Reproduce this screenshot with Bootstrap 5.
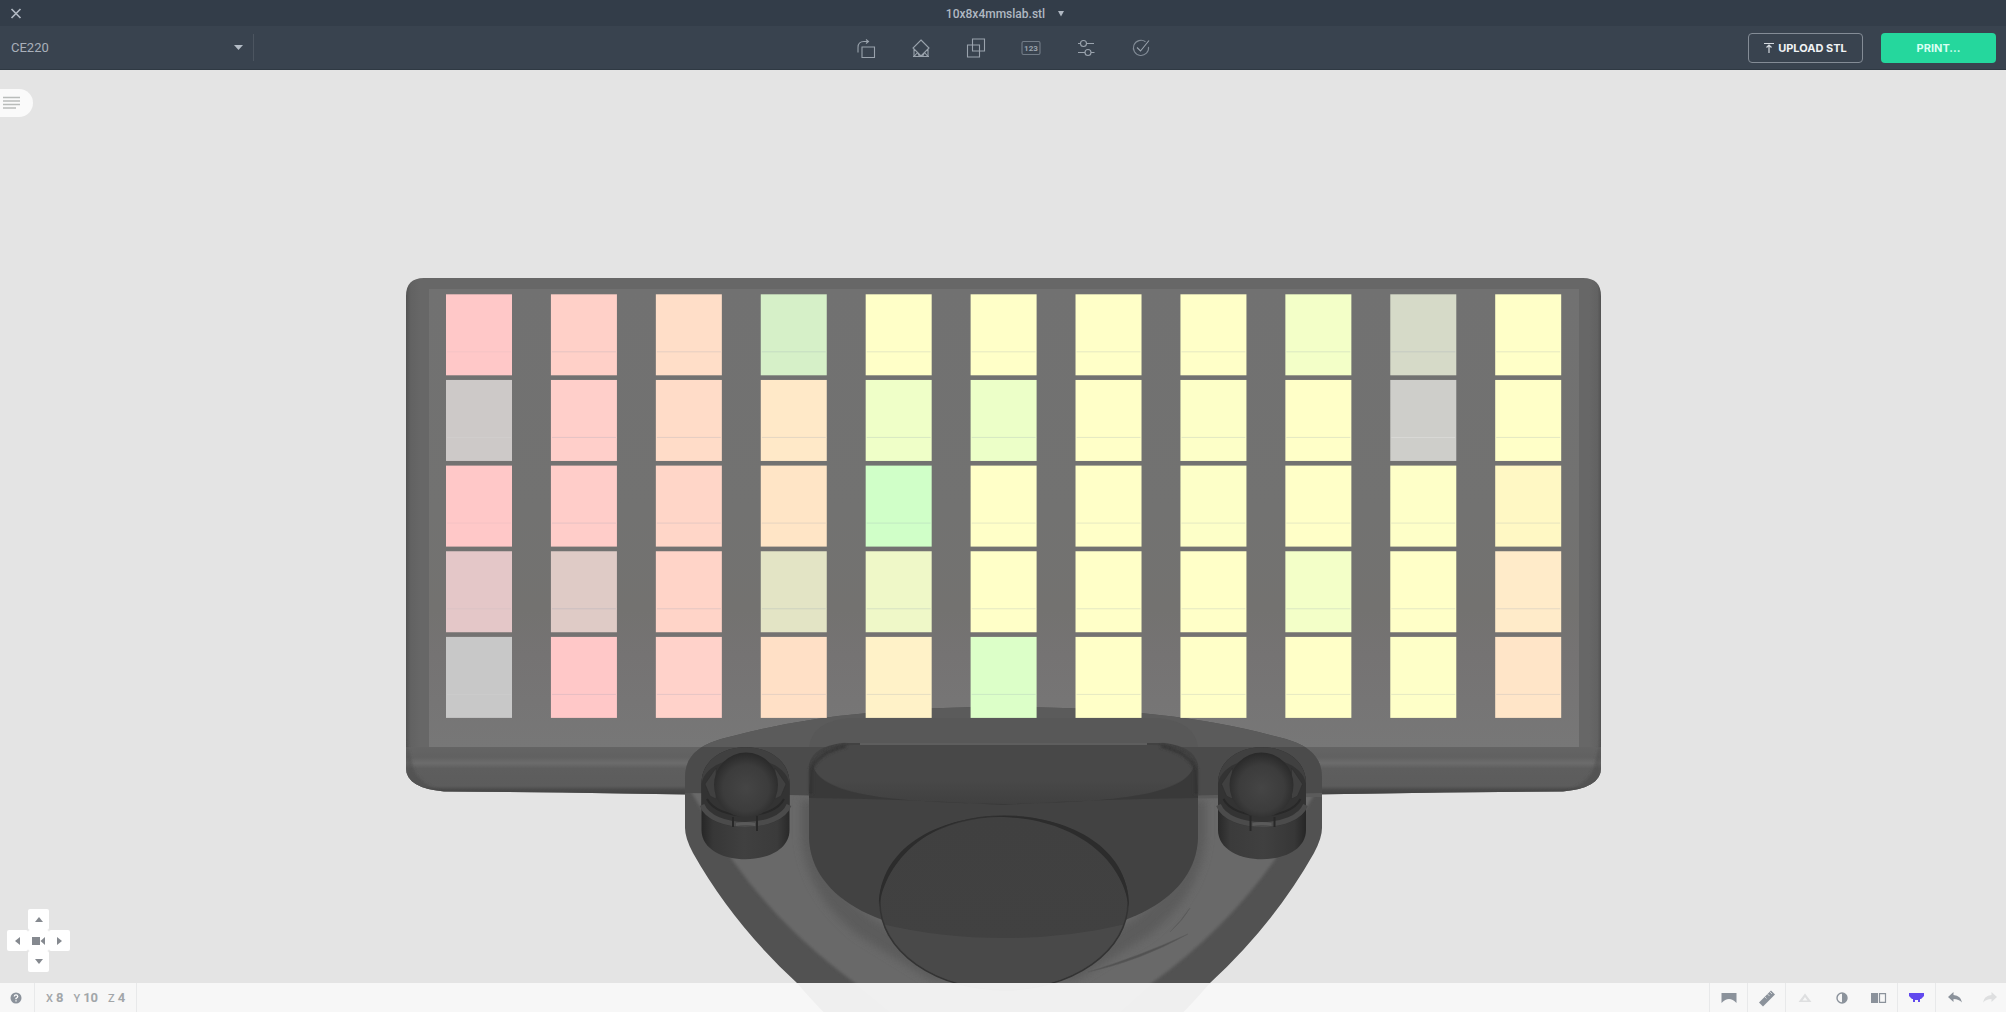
<!DOCTYPE html>
<html lang="en">
<head>
<meta charset="utf-8">
<meta name="viewport" content="width=device-width, initial-scale=1">
<title>10x8x4mmslab.stl</title>
<link href="https://cdn.jsdelivr.net/npm/bootstrap@5.3.0/dist/css/bootstrap.min.css" rel="stylesheet">
<style>
body{font-family:Roboto,"Liberation Sans",sans-serif;font-size:13px;line-height:16px;background:#e4e4e4;color:#b0b8c2}
svg{display:block}
.ico{width:24px;height:24px;fill:none;stroke:currentColor;stroke-width:1.1}
.plain{padding:0;border:0;background:none;color:inherit;display:flex;align-items:center;justify-content:center}
.titlebar{height:26px;background:#333d49}
.filename{font-size:12px;line-height:16px;font-weight:500;gap:13px;padding-top:1px}
.toolbar{height:44px;background:#39434f;border-bottom:1px solid #2f3943}
.side{flex:1 1 0}
.tools{gap:31px;color:#9aa3ad}
.printer{position:relative;width:254px;border-right:1px solid #4c5560;height:27px}
.printer select{appearance:none;width:100%;height:27px;border:0;background:none;color:#a9b0ba;padding:0 11px;font-size:13px;line-height:16px}
.caret{position:absolute;right:10px;top:11px;pointer-events:none}
.actions{gap:18px;margin-right:10px}
.actbtn{width:115px;height:30px;padding:0;font-family:Inter,"Liberation Sans",sans-serif;font-size:11px;line-height:16px;font-weight:700;border-radius:4px;color:#f1f3f5}
.upload{border:1px solid #848c96}
.print{background:#25d79d;color:#d9fff2}
.stage{min-height:0}
.tab{left:0;top:19px;width:33px;height:28px;background:#fafafa;border-radius:0 14px 14px 0}
.pad{left:7px;bottom:40px;display:grid;grid-template-columns:repeat(3,21px);grid-template-rows:repeat(3,21px);color:#85898f}
.pad button{background:#fff;border-radius:2px}
.up{grid-area:1/2}.left{grid-area:2/1}.mid{grid-area:2/2}.right{grid-area:2/3}.down{grid-area:3/2}
.status{height:29px;background:rgba(248,248,248,.95);color:#a2a6a9;font-weight:700}
.status .plain{width:37px;height:29px;color:#8b929b}
.status .helpbtn{width:34px}
.status .lastbtn{width:33px}
.cellset{display:flex;border-left:1px solid #e8e9ea}
.dims{gap:10px;padding:1px 11px 0 11px;border-left:1px solid #e8e9ea;border-right:1px solid #e8e9ea}
.axis{font-size:11px;font-weight:500;margin-right:3px}
.status .faint{color:#dedfe0}.status .active{color:#6149ee}
</style>
<script src="https://cdn.jsdelivr.net/npm/bootstrap@5.3.0/dist/js/bootstrap.bundle.min.js"></script>
</head>
<body class="vh-100 overflow-hidden d-flex flex-column position-relative">
<header>
  <div class="titlebar d-flex align-items-center">
    <div class="side ps-1"><button class="plain" aria-label="Close"><svg class="ico" viewBox="0 0 24 24"><path d="M7.500 8l9 9M16.500 8l-9 9" stroke-width="1.700"/></svg></button></div>
    <button class="plain filename">10x8x4mmslab.stl<svg width="6" height="6" viewBox="0 0 6 6" fill="currentColor"><path d="M0 0h6L3 5.500z"/></svg></button>
    <div class="side"></div>
  </div>
  <div class="toolbar d-flex align-items-center">
    <div class="side"><div class="printer"><select aria-label="Printer"><option>CE220</option></select>
      <svg class="caret" width="9" height="5" viewBox="0 0 9 5" fill="#b4bcc6"><path d="M0 0h9L4.500 5z"/></svg></div></div>
    <nav class="tools d-flex" aria-label="Tools">
      <button class="plain" aria-label="Rotate"><svg class="ico" viewBox="0 0 24 24"><path d="M8 11h12.500v10.500H8zM4 16.500v-5c0-4 2-6 6-6h4M12 3.500l2.500 2-2.500 2"/></svg></button>
      <button class="plain" aria-label="Supports"><svg class="ico" viewBox="0 0 24 24"><path d="M12 4l8 8-4.500 4.500L12 20l-8-8zM4 20.500h16M5 20.500V13M19 20.500V13M5.500 20l3-3.500M18.500 20l-3-3.500M10.500 20.500l-2-4M13.500 20.500l2-4"/></svg></button>
      <button class="plain" aria-label="Layout"><svg class="ico" viewBox="0 0 24 24"><path d="M8.500 3h12v12h-12zM3.500 9h12v12h-12z"/></svg></button>
      <button class="plain" aria-label="Number parts"><svg class="ico" viewBox="0 0 24 24"><rect x="3" y="5.500" width="18" height="13" rx="1.500" stroke-opacity=".6"/><text x="12" y="15" text-anchor="middle" font-size="8" font-weight="700" stroke="none" fill="currentColor">123</text></svg></button>
      <button class="plain" aria-label="Settings"><svg class="ico" viewBox="0 0 24 24"><circle cx="9.500" cy="7.500" r="3"/><circle cx="14" cy="16.500" r="3"/><path d="M4 7.500h2.500M12.500 7.500H20M4 16.500h7M17 16.500h3.500"/></svg></button>
      <button class="plain" aria-label="Validate"><svg class="ico" viewBox="0 0 24 24"><path d="M16.500 5.800a7.600 7.600 0 1 0 3 5" stroke-opacity=".75"/><path d="M8 11.500l3.500 3.500 8.500-10.500"/></svg></button>
    </nav>
    <div class="side d-flex justify-content-end"><div class="actions d-flex">
      <button class="btn actbtn upload d-flex align-items-center justify-content-center"><svg class="me-1" width="10" height="12" viewBox="0 0 10 12" fill="none" stroke="#d5dae0" stroke-width="1.200"><path d="M0 1.500h10M5 11V3M2.500 5.500L5 3l2.500 2.500"/></svg>UPLOAD STL</button>
      <button class="btn actbtn print">PRINT...</button>
    </div></div>
  </div>
</header>

<main class="stage flex-grow-1 position-relative">
<svg id="scene" width="100%" height="100%" viewBox="0 70 2006 942" preserveAspectRatio="xMidYMid slice" role="img" aria-label="Build platform with slabs">
<defs>
  <linearGradient id="gl" x1="0" x2="1"><stop offset="0" stop-color="#525252"/><stop offset=".004" stop-color="#626262"/><stop offset=".012" stop-color="#676767"/><stop offset=".99" stop-color="#676767"/><stop offset=".997" stop-color="#626262"/><stop offset="1" stop-color="#525252"/></linearGradient>
  <linearGradient id="gb" x1="0" x2="0" y1="0" y2="1"><stop offset="0" stop-color="#646464"/><stop offset=".2" stop-color="#616161"/><stop offset=".32" stop-color="#6c6c6c"/><stop offset=".43" stop-color="#5e5e5e"/><stop offset=".78" stop-color="#5c5c5c"/><stop offset=".86" stop-color="#494949"/><stop offset="1" stop-color="#3e3e3e"/></linearGradient>
  <linearGradient id="gt" x1="0" x2="0" y1="0" y2="1"><stop offset="0" stop-color="#717171"/><stop offset=".48" stop-color="#727271"/><stop offset=".7" stop-color="#737270"/><stop offset=".8" stop-color="#757373"/><stop offset="1" stop-color="#777"/></linearGradient>
  <linearGradient id="gc" x1="0" x2="1"><stop offset="0" stop-color="#262626"/><stop offset=".13" stop-color="#373737"/><stop offset=".48" stop-color="#404040"/><stop offset=".86" stop-color="#3b3b3b"/><stop offset="1" stop-color="#292929"/></linearGradient>
  <radialGradient id="ball" cx=".5" cy=".55" r=".55"><stop offset="0" stop-color="#454545"/><stop offset=".65" stop-color="#3c3c3c"/><stop offset="1" stop-color="#292929"/></radialGradient>
  <linearGradient id="ge" x1="0" x2="0" y1="0" y2="1"><stop offset="0" stop-color="#404040"/><stop offset=".72" stop-color="#414141"/><stop offset="1" stop-color="#4c4c4c"/></linearGradient>
  <linearGradient id="lid" x1="0" x2="0" y1="0" y2="1"><stop offset="0" stop-color="#484848"/><stop offset=".6" stop-color="#484848"/><stop offset="1" stop-color="#404040"/></linearGradient>
  <filter id="soft" x="-10%" y="-10%" width="120%" height="120%"><feGaussianBlur stdDeviation="4"/></filter>
  <filter id="edge" x="-10%" y="-10%" width="120%" height="120%"><feGaussianBlur stdDeviation="1.500"/></filter>
  <clipPath id="platclip"><path id="plat" d="M406 296Q406 278 424 278H1583Q1601 278 1601 296V768Q1601 788 1563 791.500Q1440 792 1200 796.500H807Q567 792 444 791.500Q406 788 406 768Z"/></clipPath>
  <clipPath id="brclip"><path d="M685 778C685 752 705 742 733 736Q840 707 1003.500 707T1274 736C1302 742 1322 752 1322 778V828Q1322 838 1314 853Q1274 924 1210 983Q1185 1012 1165 1030H842Q822 1012 797 983Q733 924 693 853Q685 838 685 828Z"/></clipPath>
  <clipPath id="cupin"><ellipse cx="1004" cy="903" rx="123" ry="86"/></clipPath>
  <g id="mount">
    <path d="M701.500 784C701.500 735 789.500 735 789.500 784V830C789.500 869 701.500 869 701.500 830Z" fill="url(#gc)"/>
    <path d="M701.500 784C701.500 735 789.500 735 789.500 784V806C785 834 706 834 701.500 806Z" fill="#333"/>
    <path d="M701.500 784C701.500 735 789.500 735 789.500 784C784 750 707 750 701.500 784Z" fill="#404040"/>
    <path d="M705 784L716 768V799L710 796ZM786 784L775 768V799L781 796Z" fill="#404040" stroke="#2c2c2c" stroke-width=".5"/>
    <path d="M702 805C712 831 779 831 789 805" fill="none" stroke="#4b4b4b" stroke-width="5"/>
    <path d="M707 799C718 821 773 821 784 799" fill="none" stroke="#282828" stroke-width="2"/>
    <path d="M733 817V827M757 816V831" stroke="#282828" stroke-width="2"/><path d="M736 823Q746 821 755 823V826Q746 824 736 826Z" fill="#5a5a5a"/>
    <ellipse cx="746" cy="785" rx="32" ry="32.500" fill="url(#ball)"/>
  </g>
</defs>
<g>
  <use href="#plat" fill="url(#gl)"/>
  <g clip-path="url(#platclip)"><rect x="406" y="747" width="1195" height="50" fill="url(#gb)"/>
  <path d="M406 740L412 762Q414 781 442 792H406ZM1601 740L1595 762Q1593 781 1565 792H1601Z" fill="#484848" fill-opacity=".45" filter="url(#edge)"/></g>
  <rect x="429" y="289" width="1150" height="458" fill="url(#gt)"/>
</g>
<g clip-path="url(#brclip)">
  <rect x="680" y="700" width="650" height="330" fill="#525252"/>
  <path d="M690 790L733 861Q782 930 855 983L890 1012H1120L1152 983Q1225 930 1274 861L1317 790Z" fill="#696969" filter="url(#edge)"/>
  <path d="M812 800V838Q817 889 864 926L935 970H1072L1143 926Q1190 889 1195 838V800" fill="none" stroke="#5c5c5c" stroke-width="22" filter="url(#soft)"/>
  <path d="M680 700H1330V797Q1003 802 680 792Z" fill="#5b5b5b"/>
  <path d="M680 747H1330V793Q1200 795 1003 800Q800 795 680 793Z" fill="#4b4b4b"/>
  <path d="M809 747Q812 721 850 718H1157Q1195 721 1198 747Z" fill="#585858"/>
  <path d="M809 765Q812 747 842 743H1165Q1195 747 1198 765V838C1196 899 1125 938 1003.500 938C883 938 811 899 809 838Z" fill="#424242"/>
  <path d="M813 765C817 752 832 745 860 745H1147C1175 745 1190 752 1194 765C1188 795 1100 804 1003 804S819 795 813 765Z" fill="url(#lid)"/>
  <path d="M813 765C819 800 920 802 1003 804C1087 802 1188 800 1194 765C1198 785 1198 793 1198 798Q1100 799 1003 805Q907 799 809 798C809 793 809 785 813 765Z" fill="#393939"/>
  <path d="M860 744H1147" stroke="#5e5e5e" stroke-width="2"/>
  <path d="M811 794V770Q818 752 846 746M1196 794V770Q1189 752 1161 746" fill="none" stroke="#333" stroke-width="3" filter="url(#edge)"/>
  <ellipse cx="1004" cy="903" rx="124" ry="87" fill="url(#ge)" stroke="#333" stroke-width="1.500"/>
  <path d="M882 924Q940 938 1004 938T1126 924L1130 990H880Z" fill="#494949" clip-path="url(#cupin)"/>
  <path d="M879 907C878 850 935 816 1004 816S1130 850 1129 907C1122 858 1075 820 1004 817S886 858 879 907Z" fill="#2c2c2c"/>
  <path d="M1088 972Q1140 956 1188 934Q1140 961 1088 972ZM1170 932Q1183 920 1190 908Q1181 921 1170 932Z" fill="#525252" stroke="#5c5c5c" stroke-width=".5"/>
</g>
<use href="#mount"/>
<use href="#mount" transform="translate(2007.500 0) scale(-1 1)"/>
<g id="slabs"></g>
</svg>
<button class="plain tab position-absolute" aria-label="Open list"><svg width="33" height="28" stroke="#b9bcba" stroke-width="1.300"><path d="M3 8.500h17M3 12h17M3 15.500h17M3 19h13"/></svg></button>
<div class="pad position-absolute">
  <button class="plain up" aria-label="Top view"><svg width="8" height="5" fill="currentColor"><path d="M0 5h8L4 0z"/></svg></button>
  <button class="plain left" aria-label="Left view"><svg width="5" height="8" fill="currentColor"><path d="M5 0v8L0 4z"/></svg></button>
  <button class="plain mid" aria-label="Camera"><svg width="14" height="8" fill="currentColor"><path d="M0 0h8v8H0zM13 0v8L8.500 4z"/></svg></button>
  <button class="plain right" aria-label="Right view"><svg width="5" height="8" fill="currentColor"><path d="M0 0v8l5-4z"/></svg></button>
  <button class="plain down" aria-label="Bottom view"><svg width="8" height="5" fill="currentColor"><path d="M0 0h8L4 5z"/></svg></button>
</div>
<footer class="status position-absolute bottom-0 start-0 end-0 d-flex justify-content-between">
  <div class="d-flex">
    <button class="plain helpbtn" aria-label="Help"><svg width="14" height="12" viewBox="0 0 14 12"><circle cx="6" cy="6" r="5.500" fill="currentColor"/><path d="M4.200 4.500Q4.500 2.800 6 2.800T7.800 4.500Q7.800 5.500 6 6.400V7.200M6 8.200V9.500" fill="none" stroke="#fff" stroke-width="1.300"/></svg></button>
    <div class="dims d-flex align-items-center"><span><span class="axis">X</span>8</span><span><span class="axis">Y</span>10</span><span><span class="axis">Z</span>4</span></div>
  </div>
  <div class="d-flex">
    <div class="cellset"><button class="plain" aria-label="Perspective"><svg width="16" height="12" fill="currentColor"><path d="M.500 1h15v10Q8 3 .500 11z"/></svg></button></div>
    <div class="cellset"><button class="plain" aria-label="Measure"><svg width="18" height="18" viewBox="0 0 18 18"><path d="M1 13.500L13 1.500l4 4-12 12z" fill="currentColor"/><path d="M9.500 5l2 2M12 3l2 2M7 8l1.500 1.500" stroke="#d4d7da"/></svg></button></div>
    <div class="cellset"><button class="plain faint" aria-label="Overhangs"><svg width="14" height="10" fill="currentColor"><path d="M7 .500L13.500 9H.500zM7 4L4.500 7.500h5z" fill-rule="evenodd"/></svg></button>
      <button class="plain" aria-label="Contrast"><svg width="12" height="12"><circle cx="6" cy="6" r="5" fill="none" stroke="currentColor" stroke-width="1.400"/><path d="M6 1a5 5 0 0 1 0 10z" fill="currentColor"/></svg></button>
      <button class="plain" aria-label="Split view"><svg width="16" height="10"><path d="M0 0h7v10H0z" fill="currentColor"/><path d="M8.500.700h6v8.600h-6z" fill="none" stroke="currentColor" stroke-width="1.200"/></svg></button></div>
    <div class="cellset"><button class="plain active" aria-label="Show platform"><svg width="15" height="10" fill="currentColor"><path d="M0 0h15v3L12 6h-1v3H9V7H6v2H4V6H3L0 3z"/></svg></button></div>
    <div class="cellset"><button class="plain" aria-label="Undo"><svg width="14" height="11" fill="currentColor"><path d="M5.500 0v3Q13 3.500 14 10.500Q11 7 5.500 7v3L0 5z"/></svg></button>
      <button class="plain faint lastbtn" aria-label="Redo"><svg width="14" height="11" fill="currentColor"><path d="M8.500 0v3Q1 3.500 0 10.500Q3 7 8.500 7v3L14 5z"/></svg></button></div>
  </div>
</footer>
</main>
<script>
// Colour of each slab on the platform, row by row.
const rows=[
'ffc8c8 ffd0c8 ffdec8 d6f0c8 ffffc8 ffffc8 ffffc8 ffffc8 f3ffc8 d6dac8 ffffc8',
'cdc9c8 ffcfca ffdcc8 ffe9c8 efffc8 ecffc8 ffffc8 fdffc8 ffffc8 cececa ffffc8',
'ffc8c8 ffcdc9 ffd6c8 ffe5c6 d0ffc8 ffffc8 ffffc8 fdffc8 ffffc8 feffc8 fff8c4',
'e4c7c8 dfcbc6 ffd4c8 e3e4c5 eff8c8 ffffc8 ffffc8 ffffc8 f3ffc8 ffffc8 ffebc9',
'c8c8c8 ffc8c8 ffd2ca ffe0c6 fff2c8 dcffc8 ffffc8 ffffc8 ffffc8 feffc8 ffe5c8'];
document.getElementById('slabs').innerHTML=rows.map((r,j)=>r.split(' ').map((c,i)=>{
 const x=446+i*104.92,y=294.3+j*85.65;
 return `<rect x="${x}" y="${y}" width="66" height="81" fill="#${c}"/><rect x="${x+1}" y="${y+57}" width="64" height="1" fill="${c[0]<'d'?'#fff':'#8899b0'}" fill-opacity="${i?.22:.08}"/>`;
}).join('')).join('');
</script>
</body>
</html>
